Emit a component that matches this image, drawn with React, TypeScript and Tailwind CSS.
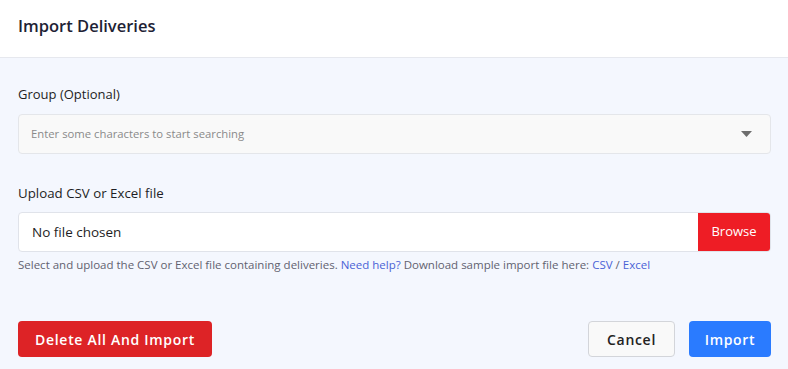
export default function App() {
  return (
    <div className="w-[788px] h-[369px] bg-[#f4f7fe] overflow-hidden" style={{ fontFamily: '"Open Sans", sans-serif' }}>
      <div className="h-[58px] bg-white border-b border-[#e6e8ee] flex items-center pl-[18px] pb-[6px]">
        <h1 className="text-[16.5px] leading-[24px] font-semibold text-[#1e2235]">Import Deliveries</h1>
      </div>
      <div className="pl-[18px] pr-[17px] pt-[28px]">
        <label className="block text-[13px] leading-[16px] text-[#1e1e24] mb-[12px]">Group (Optional)</label>
        <div className="h-[40px] bg-[#f9f9f9] border border-[#e4e6ea] rounded-[4px] flex items-center justify-between pl-[12px] pr-[18px]">
          <span className="text-[11.3px] text-[#8a8a8a]">Enter some characters to start searching</span>
          <svg width="11" height="6" viewBox="0 0 11 6">
            <path d="M0 0h11L5.5 6z" fill="#6e6e6e" />
          </svg>
        </div>
        <label className="block text-[13.3px] leading-[16px] text-[#1e1e24] mt-[31px] mb-[11px]">Upload CSV or Excel file</label>
        <div className="h-[40px] bg-white border border-[#e0e3ea] rounded-[4px] flex overflow-hidden">
          <span className="flex-1 flex items-center pl-[13px] text-[13.5px] text-[#1e1e24]">No file chosen</span>
          <button className="w-[72px] bg-[#ee1d25] text-white text-[13px]">Browse</button>
        </div>
        <p className="mt-[5px] text-[11.5px] leading-[16px] text-[#626270]">
          Select and upload the CSV or Excel file containing deliveries.{' '}
          <a className="text-[#4a63d6]">Need help?</a> Download sample import file here:{' '}
          <a className="text-[#4a63d6]">CSV</a> / <a className="text-[#4a63d6]">Excel</a>
        </p>
        <div className="mt-[48px] flex items-center justify-between">
          <button className="h-[36px] w-[194px] bg-[#dd2326] rounded-[4px] text-white text-[14px] font-semibold tracking-wider">
            Delete All And Import
          </button>
          <div className="flex gap-[14px]">
            <button className="h-[36px] w-[87px] bg-[#f9f9f9] border border-[#d3d5da] rounded-[4px] text-[#222] text-[14px] font-semibold tracking-wider">
              Cancel
            </button>
            <button className="h-[36px] w-[82px] bg-[#2a7bff] rounded-[4px] text-white text-[14px] font-semibold tracking-wider">
              Import
            </button>
          </div>
        </div>
      </div>
    </div>
  )
}
